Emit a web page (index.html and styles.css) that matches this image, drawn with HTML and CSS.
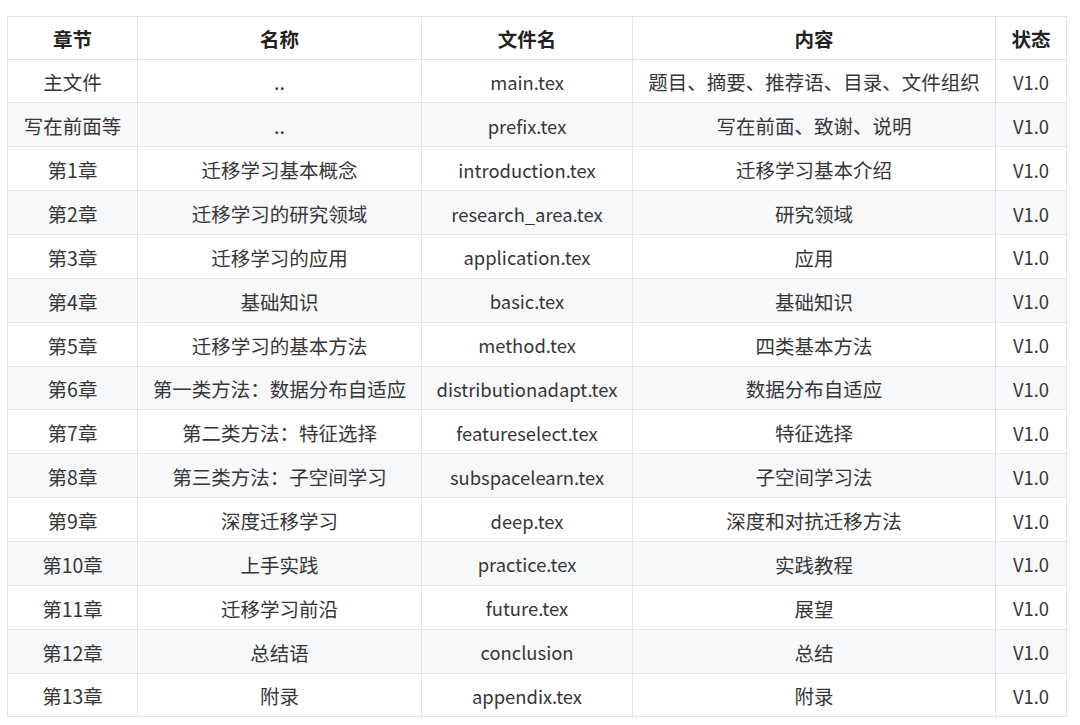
FILE: index.html
```html
<!DOCTYPE html>
<html lang="zh-CN">
<head>
<meta charset="utf-8">
<title>章节</title>
<link rel="stylesheet" href="styles.css">
</head>
<body>
<table class="doc-table">
  <colgroup>
    <col class="c1"><col class="c2"><col class="c3"><col class="c4"><col class="c5">
  </colgroup>
  <thead>
    <tr><th>章节</th><th>名称</th><th>文件名</th><th>内容</th><th>状态</th></tr>
  </thead>
  <tbody>
    <tr><td>主文件</td><td>..</td><td>main.tex</td><td>题目、摘要、推荐语、目录、文件组织</td><td>V1.0</td></tr>
    <tr><td>写在前面等</td><td>..</td><td>prefix.tex</td><td>写在前面、致谢、说明</td><td>V1.0</td></tr>
    <tr><td>第1章</td><td>迁移学习基本概念</td><td>introduction.tex</td><td>迁移学习基本介绍</td><td>V1.0</td></tr>
    <tr><td>第2章</td><td>迁移学习的研究领域</td><td>research_area.tex</td><td>研究领域</td><td>V1.0</td></tr>
    <tr><td>第3章</td><td>迁移学习的应用</td><td>application.tex</td><td>应用</td><td>V1.0</td></tr>
    <tr><td>第4章</td><td>基础知识</td><td>basic.tex</td><td>基础知识</td><td>V1.0</td></tr>
    <tr><td>第5章</td><td>迁移学习的基本方法</td><td>method.tex</td><td>四类基本方法</td><td>V1.0</td></tr>
    <tr><td>第6章</td><td>第一类方法：数据分布自适应</td><td>distributionadapt.tex</td><td>数据分布自适应</td><td>V1.0</td></tr>
    <tr><td>第7章</td><td>第二类方法：特征选择</td><td>featureselect.tex</td><td>特征选择</td><td>V1.0</td></tr>
    <tr><td>第8章</td><td>第三类方法：子空间学习</td><td>subspacelearn.tex</td><td>子空间学习法</td><td>V1.0</td></tr>
    <tr><td>第9章</td><td>深度迁移学习</td><td>deep.tex</td><td>深度和对抗迁移方法</td><td>V1.0</td></tr>
    <tr><td>第10章</td><td>上手实践</td><td>practice.tex</td><td>实践教程</td><td>V1.0</td></tr>
    <tr><td>第11章</td><td>迁移学习前沿</td><td>future.tex</td><td>展望</td><td>V1.0</td></tr>
    <tr><td>第12章</td><td>总结语</td><td>conclusion</td><td>总结</td><td>V1.0</td></tr>
    <tr><td>第13章</td><td>附录</td><td>appendix.tex</td><td>附录</td><td>V1.0</td></tr>
  </tbody>
</table>
</body>
</html>
```
FILE: styles.css
```css
html, body {
  margin: 0;
  padding: 0;
  background: #ffffff;
}
body {
  padding: 16px 0 0 7px;
  font-family: "Noto Sans CJK SC", "Noto Sans", sans-serif;
  color: #363636;
}
.doc-table {
  border-collapse: collapse;
  table-layout: fixed;
  width: 1059px;
  font-size: 19.5px;
}
.c1 { width: 130px; }
.c2 { width: 284px; }
.c3 { width: 211px; }
.c4 { width: 363px; }
.c5 { width: 71px; }
.doc-table th,
.doc-table td {
  border: 1px solid #e2e4e7;
  text-align: center;
  padding: 2px 0 0;
  white-space: nowrap;
  overflow: hidden;
}
.doc-table th {
  height: 39.5px;
  font-weight: 700;
  color: #222222;
}
.doc-table td {
  height: 40.87px;
}
.doc-table tbody td:nth-child(3),
.doc-table tbody td:nth-child(5) {
  font-size: 18.4px;
}
.doc-table tbody tr:nth-child(even) {
  background: #f6f8fa;
}
```
